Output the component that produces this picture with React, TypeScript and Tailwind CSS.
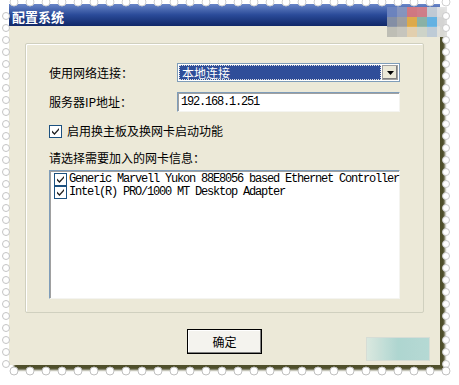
import React from "react";

const cjk = "font-['SimSun','Noto_Sans_CJK_SC',sans-serif]";
const mono = "font-['Liberation_Mono','Noto_Sans_CJK_SC',monospace]";

function Check() {
  return (
    <span className="flex h-[13px] w-[13px] shrink-0 items-center justify-center border border-[#1c5180] bg-white">
      <svg width="9" height="9" viewBox="0 0 9 9">
        <path d="M1 3.5 L1 5.5 L3.5 8 L8 3 L8 1 L3.5 6 Z" fill="#222" />
      </svg>
    </span>
  );
}

function Scallops() {
  const top = Array.from({ length: 28 }, (_, i) => 14 + i * 16);
  const side = Array.from({ length: 30 }, (_, i) => 16 + i * 12);
  return (
    <svg className="pointer-events-none absolute left-0 top-0" width="459" height="385">
      {top.map((x) => (
        <circle key={"t" + x} cx={x} cy={2} r={4} fill="#fff" stroke="#d0d0d0" strokeWidth="1" />
      ))}
      {side.map((y) => (
        <circle key={"l" + y} cx={6} cy={y} r={3.5} fill="#fff" stroke="#c4c4c4" strokeWidth="1" />
      ))}
      {side.map((y) => (
        <circle key={"r" + y} cx={446} cy={y} r={3.5} fill="#fff" stroke="#c8c8c8" strokeWidth="1" />
      ))}
      {top.map((x) => (
        <circle key={"b" + x} cx={x} cy={371} r={4} fill="#fff" stroke="#c0c0c0" strokeWidth="1" />
      ))}
    </svg>
  );
}

function Mosaic() {
  const cells = [
    ["#6f86c0", "#8a98c0", "#d87a80", "#d88088", "#c8d0d8", "#e4e4e4"],
    ["#8a94a8", "#a4a4a4", "#e8b048", "#90b8a8", "#68b8e8", "#dcdcdc"],
    ["#bcbcb4", "#c4c4bc", "#e2ceac", "#ccd2c8", "#bccad6", "#e0e0dc"],
  ];
  return (
    <div className="absolute left-[387px] top-[7px] flex flex-col opacity-95">
      {cells.map((row, r) => (
        <div key={r} className="flex">
          {row.map((c, i) => (
            <div key={i} className="h-[10px] w-[10px]" style={{ backgroundColor: c }} />
          ))}
        </div>
      ))}
    </div>
  );
}

export default function App() {
  return (
    <div className="relative h-[385px] w-[459px] overflow-hidden bg-white">
      <div className="ml-[9px] mt-[4px] flex h-[361px] w-[431px] flex-col bg-[#ece9d8] shadow-[5px_5px_2px_rgba(60,60,20,0.9)]">
        {/* title bar */}
        <div className="flex h-[22px] items-center bg-gradient-to-b from-[#6a86c8] via-[#2a4a98] to-[#112868] pl-[3px] pt-[3px]">
          <span className={`${cjk} text-[13px] font-bold text-white`}>配置系统</span>
        </div>

        <div className="flex flex-1 flex-col items-center pt-[17px]">
          {/* group box */}
          <div className="flex h-[270px] w-[399px] flex-col rounded-[2px] border border-[#d0d0bf] px-[23px] pb-[13px] pt-[19px] shadow-[inset_1px_1px_0_#fff]">
            <div className="flex h-[19px] items-center">
              <span className={`${cjk} w-[128px] text-[12px] leading-[14px] text-black`}>使用网络连接：</span>
              <div className="flex h-[19px] flex-1 items-center border border-[#7f9db9] bg-white p-[1px]">
                <div className="flex h-full flex-1 items-center border border-dotted border-[#e0e0e0] bg-[#2f4e99] pl-[2px]">
                  <span className={`${cjk} text-[12px] leading-[14px] text-white`}>本地连接</span>
                </div>
                <div className="ml-[1px] flex h-full w-[16px] items-center justify-center border border-[#a0a0a0] bg-[#ece9d8] shadow-[inset_-1px_-1px_0_#808080]">
                  <svg width="7" height="4" viewBox="0 0 7 4">
                    <path d="M0 0 H7 L3.5 4 Z" fill="#000" />
                  </svg>
                </div>
              </div>
            </div>

            <div className="mt-[10px] flex h-[20px] items-center">
              <span className={`${cjk} w-[128px] text-[12px] leading-[14px] text-black`}>服务器IP地址：</span>
              <div className="flex h-[20px] flex-1 items-center border border-[#7f9db9] border-b-[#f4f4f0] border-r-[#f4f4f0] bg-white pl-[3px] shadow-[inset_1px_1px_0_#a0a0a0]">
                <span className={`${mono} text-[12px] leading-[14px] tracking-[-1.2px] text-black`}>192.168.1.251</span>
              </div>
            </div>

            <div className="mt-[12px] flex h-[14px] items-center gap-[5px]">
              <Check />
              <span className={`${cjk} text-[12px] leading-[14px] text-black`}>启用换主板及换网卡启动功能</span>
            </div>

            <div className={`${cjk} mt-[13px] h-[14px] text-[12px] leading-[14px] text-black`}>请选择需要加入的网卡信息：</div>

            <div className="mt-[5px] flex flex-1 flex-col border border-[#7f9db9] border-b-[#f4f4f0] border-r-[#f4f4f0] bg-white pl-[4px] pt-[2px] shadow-[inset_1px_1px_0_#a0a0a0]">
              {["Generic Marvell Yukon 88E8056 based Ethernet Controller", "Intel(R) PRO/1000 MT Desktop Adapter"].map((t) => (
                <div key={t} className="flex h-[13px] items-center gap-[2px]">
                  <Check />
                  <span className={`${mono} whitespace-pre text-[12px] leading-[13px] tracking-[-1.2px] text-black`}>{t}</span>
                </div>
              ))}
            </div>
          </div>

          <div className="mt-[16px] flex h-[25px] w-[75px] items-center justify-center border border-black bg-[#f4f3ee] shadow-[inset_-1px_-1px_0_#808080,inset_1px_1px_0_#fff]">
            <span className={`${cjk} text-[12px] leading-[14px] text-black`}>确定</span>
          </div>
        </div>
      </div>

      <div className="absolute left-[366px] top-[337px] h-[24px] w-[64px] border border-[#d4dcd6] bg-gradient-to-r from-[#d8e8e0] via-[#a8d4d0] to-[#b0d8d4] opacity-90" />
      <Mosaic />
      <Scallops />
    </div>
  );
}
